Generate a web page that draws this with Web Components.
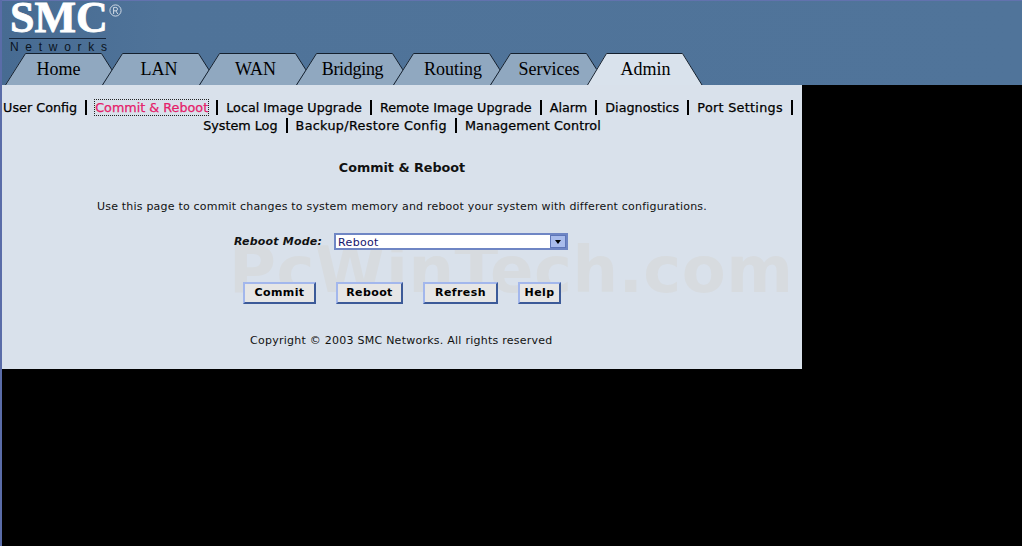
<!DOCTYPE html>
<html>
<head>
<meta charset="utf-8">
<title>Commit &amp; Reboot</title>
<style>
html,body{margin:0;padding:0;height:100%;background:#000;overflow:hidden;}
body{border-left:2px solid #5a6ca8;box-sizing:border-box;font-family:"DejaVu Sans",Verdana,sans-serif;}
</style>
</head>
<body>
<smc-app></smc-app>
<script>
class SmcLogo extends HTMLElement{
	constructor(){
		super();
		this.attachShadow({mode:'open'}).innerHTML=`
<style>
:host{display:block;width:110px;height:53px;color:#fff;position:relative;padding-top:2px;box-sizing:border-box;}
#smc{display:block;font:bold 44px/29px "Liberation Serif",serif;margin-left:8px;-webkit-text-stroke:.8px #fff;white-space:nowrap;}
#r{position:absolute;left:107px;top:3px;width:13px;height:13px;}
#rule{height:1px;background:#16263c;margin:6px 0 0 7px;width:97px;}
#net{display:block;font:12px/14px "Liberation Sans",sans-serif;letter-spacing:6.7px;color:#0b1420;margin:1px 0 0 8px;white-space:nowrap;}
</style>
<span id="smc">SMC</span>
<svg id="r" viewBox="0 0 13 13"><circle cx="6.5" cy="6.5" r="5.6" fill="none" stroke="#cfd9e4" stroke-width="1"/><path d="M4.6 10V3.4h2.2a1.7 1.7 0 0 1 0 3.4H4.6M6.8 6.8L8.8 10" fill="none" stroke="#cfd9e4" stroke-width="1"/></svg>
<div id="rule"></div>
<span id="net">Networks</span>`;
	}
}
customElements.define('smc-logo',SmcLogo);

class SmcTab extends HTMLElement{
	constructor(){
		super();
		this.attachShadow({mode:'open'}).innerHTML=`
<style>
:host{display:block;position:relative;width:97px;height:32px;flex:none;color:#000;}
:host(:last-child){width:117px;}
svg{position:absolute;left:0;top:0;}
#t{position:relative;display:block;text-align:center;width:107px;padding-left:calc(10px + var(--dx,0px));box-sizing:border-box;font:18px/32px "Liberation Serif",serif;}
:host(:last-child) #t{width:117px;padding-left:0;}
</style>
<svg width="120" height="32" overflow="visible"><path id="p" fill="#90a8c0"/><path id="e" fill="none" stroke="#14202e"/></svg>
<span id="t"><slot></slot></span>`;
	}
	connectedCallback(){
		const on=this.hasAttribute('active');
		const p=this.shadowRoot.getElementById('p'),e=this.shadowRoot.getElementById('e');
		if(on){
			p.setAttribute('d','M0 32L19.5 0H95.5L115 32Z');
			p.setAttribute('fill','#d9e2ec');
			e.setAttribute('d','M.5 32L19.5 .5H95.5L115 32');
		}else{
			p.setAttribute('d','M0 32L20.5 0H96.5L107 17L97 32Z');
			e.setAttribute('d','M.5 32L20.5 .5H96.5L107 17');
		}
	}
}
customElements.define('smc-tab',SmcTab);

class SmcHeader extends HTMLElement{
	constructor(){
		super();
		this.attachShadow({mode:'open'}).innerHTML=`
<style>
:host{display:block;height:84px;border-top:1px solid #6272ae;background:linear-gradient(90deg,#476b92 0,#4f7399 160px,#50749a 100%);overflow:hidden;}
#tabs{display:flex;padding-left:3px;margin-top:-1px;}
</style>
<smc-logo></smc-logo>
<div id="tabs"><slot></slot></div>`;
	}
}
customElements.define('smc-header',SmcHeader);

class SmcLink extends HTMLElement{
	constructor(){
		super();
		this.attachShadow({mode:'open'}).innerHTML=`
<style>
:host{display:inline;color:#000;}
:host([current]) span{color:#e5206a;outline:1px dotted #222;outline-offset:0;}
:host(:not(:last-child))::after{content:"";display:inline-block;width:2px;height:15px;background:#000;margin:0 4px 0 8px;vertical-align:-3px;}
:host([end])::after{margin-right:8px !important;}
span{white-space:nowrap;-webkit-text-stroke:.25px currentColor;}
</style>
<span><slot></slot></span>`;
	}
}
customElements.define('smc-link',SmcLink);

class SmcNav extends HTMLElement{
	constructor(){
		super();
		this.attachShadow({mode:'open'}).innerHTML=`
<style>
:host{display:block;text-align:center;font:12.75px/18px "DejaVu Sans",Verdana,sans-serif;padding:14px 0 0;}
</style>
<slot></slot>`;
	}
}
customElements.define('smc-nav',SmcNav);

class SmcSelect extends HTMLElement{
	constructor(){
		super();
		this.attachShadow({mode:'open'}).innerHTML=`
<style>
:host{display:block;box-sizing:border-box;width:234px;height:17px;border:2px solid #6f86c4;background:#fff;position:relative;color:#14146e;font:11px/15px "DejaVu Sans",Verdana,sans-serif;letter-spacing:.3px;}
#v{display:block;padding-left:2px;}
#b{position:absolute;right:0;top:0;bottom:0;width:16px;background:#a9bcec;border:1px solid #5e76b8;box-sizing:border-box;display:flex;align-items:center;justify-content:center;}
#b i{display:block;width:0;height:0;border:3.5px solid transparent;border-top:4px solid #000;border-bottom:0;}
</style>
<span id="v"><slot></slot></span><span id="b"><i></i></span>`;
	}
}
customElements.define('smc-select',SmcSelect);

class SmcButton extends HTMLElement{
	constructor(){
		super();
		this.attachShadow({mode:'open'}).innerHTML=`
<style>
:host{display:block;box-sizing:border-box;height:22px;text-align:center;background:#e6e6e6;border:2px solid;border-color:#a3b7ec #3c5a98 #3c5a98 #a3b7ec;color:#000;font:bold 11px/18px "DejaVu Sans",Verdana,sans-serif;letter-spacing:.4px;}
</style>
<slot></slot>`;
	}
}
customElements.define('smc-button',SmcButton);

class SmcPanel extends HTMLElement{
	constructor(){
		super();
		this.attachShadow({mode:'open'}).innerHTML=`
<style>
:host{display:block;width:800px;height:284px;background:#d9e1eb;position:relative;overflow:hidden;color:#111;}
h1{font:bold 12.75px/16px "DejaVu Sans",Verdana,sans-serif;margin:0;text-align:center;padding-top:25px;}
p{font:11px/14px "DejaVu Sans",Verdana,sans-serif;letter-spacing:.2px;margin:24px 0 0;text-align:center;}
#row{display:flex;align-items:center;margin:19px 0 0 232px;gap:12px;font:italic bold 11px/17px "DejaVu Sans",Verdana,sans-serif;letter-spacing:.2px;}
#btns{display:flex;gap:20px;margin:32px 0 0 241px;}
#copy{font:11px/14px "DejaVu Sans",Verdana,sans-serif;letter-spacing:.25px;margin:30px 0 0 248px;}
#wm{position:absolute;left:227px;top:150px;font:bold 64px/70px "DejaVu Sans",Verdana,sans-serif;color:#d7dbdf;letter-spacing:.5px;white-space:nowrap;}
#top{position:relative;}
</style>
<div id="wm">PcWinTech.com</div>
<div id="top">
<slot name="nav"></slot>
<h1>Commit &amp; Reboot</h1>
<p>Use this page to commit changes to system memory and reboot your system with different configurations.</p>
<div id="row"><span>Reboot Mode:</span><smc-select>Reboot</smc-select></div>
<div id="btns">
<smc-button style="width:73px">Commit</smc-button>
<smc-button style="width:67px">Reboot</smc-button>
<smc-button style="width:75px">Refresh</smc-button>
<smc-button style="width:43px">Help</smc-button>
</div>
<div id="copy">Copyright © 2003 SMC Networks. All rights reserved</div>
</div>`;
	}
}
customElements.define('smc-panel',SmcPanel);

class SmcApp extends HTMLElement{
	constructor(){
		super();
		this.attachShadow({mode:'open'}).innerHTML=`
<style>:host{display:block;}</style>
<smc-header>
<smc-tab style="--dx:-10px">Home</smc-tab><smc-tab style="--dx:-3px">LAN</smc-tab><smc-tab style="--dx:-4px">WAN</smc-tab><smc-tab style="--dx:-4px;letter-spacing:-.3px">Bridging</smc-tab><smc-tab style="--dx:3px">Routing</smc-tab><smc-tab style="--dx:1px">Services</smc-tab><smc-tab active>Admin</smc-tab>
</smc-header>
<smc-panel>
<smc-nav slot="nav">
<smc-link>User Config</smc-link>
<smc-link current>Commit &amp; Reboot</smc-link>
<smc-link>Local Image Upgrade</smc-link>
<smc-link>Remote Image Upgrade</smc-link>
<smc-link>Alarm</smc-link>
<smc-link>Diagnostics</smc-link>
<smc-link end style="letter-spacing:.3px">Port Settings</smc-link>
<smc-link>System Log</smc-link>
<smc-link style="letter-spacing:.33px">Backup/Restore Config</smc-link>
<smc-link style="letter-spacing:.1px">Management Control</smc-link>
</smc-nav>
</smc-panel>`;
	}
}
customElements.define('smc-app',SmcApp);
</script>
</body>
</html>
